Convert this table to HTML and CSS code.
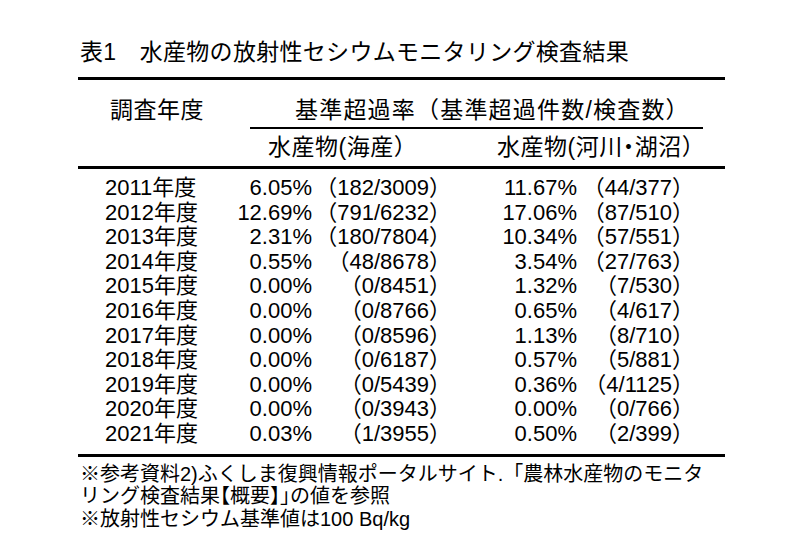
FILE: index.html
```html
<!DOCTYPE html>
<html lang="ja">
<head>
<meta charset="utf-8">
<title>表1 水産物の放射性セシウムモニタリング検査結果</title>
<link rel="stylesheet" href="styles.css">
</head>
<body>
<div class="page">
  <h1 class="title">表1　水産物の放射性セシウムモニタリング検査結果</h1>
  <div class="table">
    <div class="head">
      <div class="h-year">調査年度</div>
      <div class="h-group">
        <div class="h-main">基準超過率（基準超過件数/検査数）</div>
        <div class="h-rule"></div>
        <div class="h-sub"><span class="s1">水産物(海産）</span><span class="s2">水産物(河川<span class="tight">・</span>湖沼）</span></div>
      </div>
    </div>
    <div class="rows">
      <div class="row"><span class="yr">2011年度</span><span class="n">6.05%</span><span class="p">（182/3009）</span><span class="n">11.67%</span><span class="p">（44/377）</span></div>
      <div class="row"><span class="yr">2012年度</span><span class="n">12.69%</span><span class="p">（791/6232）</span><span class="n">17.06%</span><span class="p">（87/510）</span></div>
      <div class="row"><span class="yr">2013年度</span><span class="n">2.31%</span><span class="p">（180/7804）</span><span class="n">10.34%</span><span class="p">（57/551）</span></div>
      <div class="row"><span class="yr">2014年度</span><span class="n">0.55%</span><span class="p">（48/8678）</span><span class="n">3.54%</span><span class="p">（27/763）</span></div>
      <div class="row"><span class="yr">2015年度</span><span class="n">0.00%</span><span class="p">（0/8451）</span><span class="n">1.32%</span><span class="p">（7/530）</span></div>
      <div class="row"><span class="yr">2016年度</span><span class="n">0.00%</span><span class="p">（0/8766）</span><span class="n">0.65%</span><span class="p">（4/617）</span></div>
      <div class="row"><span class="yr">2017年度</span><span class="n">0.00%</span><span class="p">（0/8596）</span><span class="n">1.13%</span><span class="p">（8/710）</span></div>
      <div class="row"><span class="yr">2018年度</span><span class="n">0.00%</span><span class="p">（0/6187）</span><span class="n">0.57%</span><span class="p">（5/881）</span></div>
      <div class="row"><span class="yr">2019年度</span><span class="n">0.00%</span><span class="p">（0/5439）</span><span class="n">0.36%</span><span class="p">（4/1125）</span></div>
      <div class="row"><span class="yr">2020年度</span><span class="n">0.00%</span><span class="p">（0/3943）</span><span class="n">0.00%</span><span class="p">（0/766）</span></div>
      <div class="row"><span class="yr">2021年度</span><span class="n">0.03%</span><span class="p">（1/3955）</span><span class="n">0.50%</span><span class="p">（2/399）</span></div>
    </div>
  </div>
  <div class="notes">
    <p class="note">※参考資料2)ふくしま復興情報ポータルサイト.「農林水産物のモニタ</p>
    <p class="note">リング検査結果<span class="tight">【</span>概要<span class="tight">】」</span>の値を参照</p>
    <p class="note">※放射性セシウム基準値は100 Bq/kg</p>
  </div>
</div>
</body>
</html>
```

FILE: styles.css
```css
body {
  margin: 0;
  background: #fff;
  color: #000;
  font-family: "Liberation Sans", "Noto Sans CJK JP", sans-serif;
}

.page {
  padding: 37px 0 0 78px;
  width: 647px;
}

.title {
  margin: 0 0 9px 2px;
  font-size: 23px;
  font-weight: normal;
  line-height: 31px;
  letter-spacing: 0.3px;
  white-space: nowrap;
}

.table {
  border-top: 3px solid #000;
  border-bottom: 3px solid #000;
}

.head {
  display: flex;
  border-bottom: 3px solid #000;
  font-size: 23px;
  letter-spacing: 0.5px;
}

.h-year {
  width: 172px;
  box-sizing: border-box;
  padding: 15px 0 0 32px;
  line-height: 30px;
}

.h-group {
  flex: 1;
  display: flex;
  flex-direction: column;
}

.h-main {
  height: 47px;
  box-sizing: border-box;
  padding: 15px 0 0 45px;
  line-height: 30px;
  letter-spacing: 1.2px;
  white-space: nowrap;
}

.h-rule {
  height: 2px;
  background: #000;
  margin-right: 22px;
}

.h-sub {
  display: flex;
  height: 37px;
  line-height: 37px;
  padding-left: 18px;
  white-space: nowrap;
}

.h-sub .s1 {
  width: 229px;
}

.tight {
  font-feature-settings: "halt";
}

.rows {
  padding: 7px 0;
}

.row {
  display: grid;
  grid-template-columns: 152px 82px 139px 126px 117px;
  height: 24.6px;
  line-height: 24.6px;
  font-size: 22px;
  white-space: nowrap;
}

.yr {
  padding-left: 27px;
}

.n,
.p {
  text-align: right;
}

.notes {
  padding-top: 6px;
  font-size: 20px;
  line-height: 22.5px;
}

.note {
  margin: 0 0 0 2px;
  white-space: nowrap;
}
```
